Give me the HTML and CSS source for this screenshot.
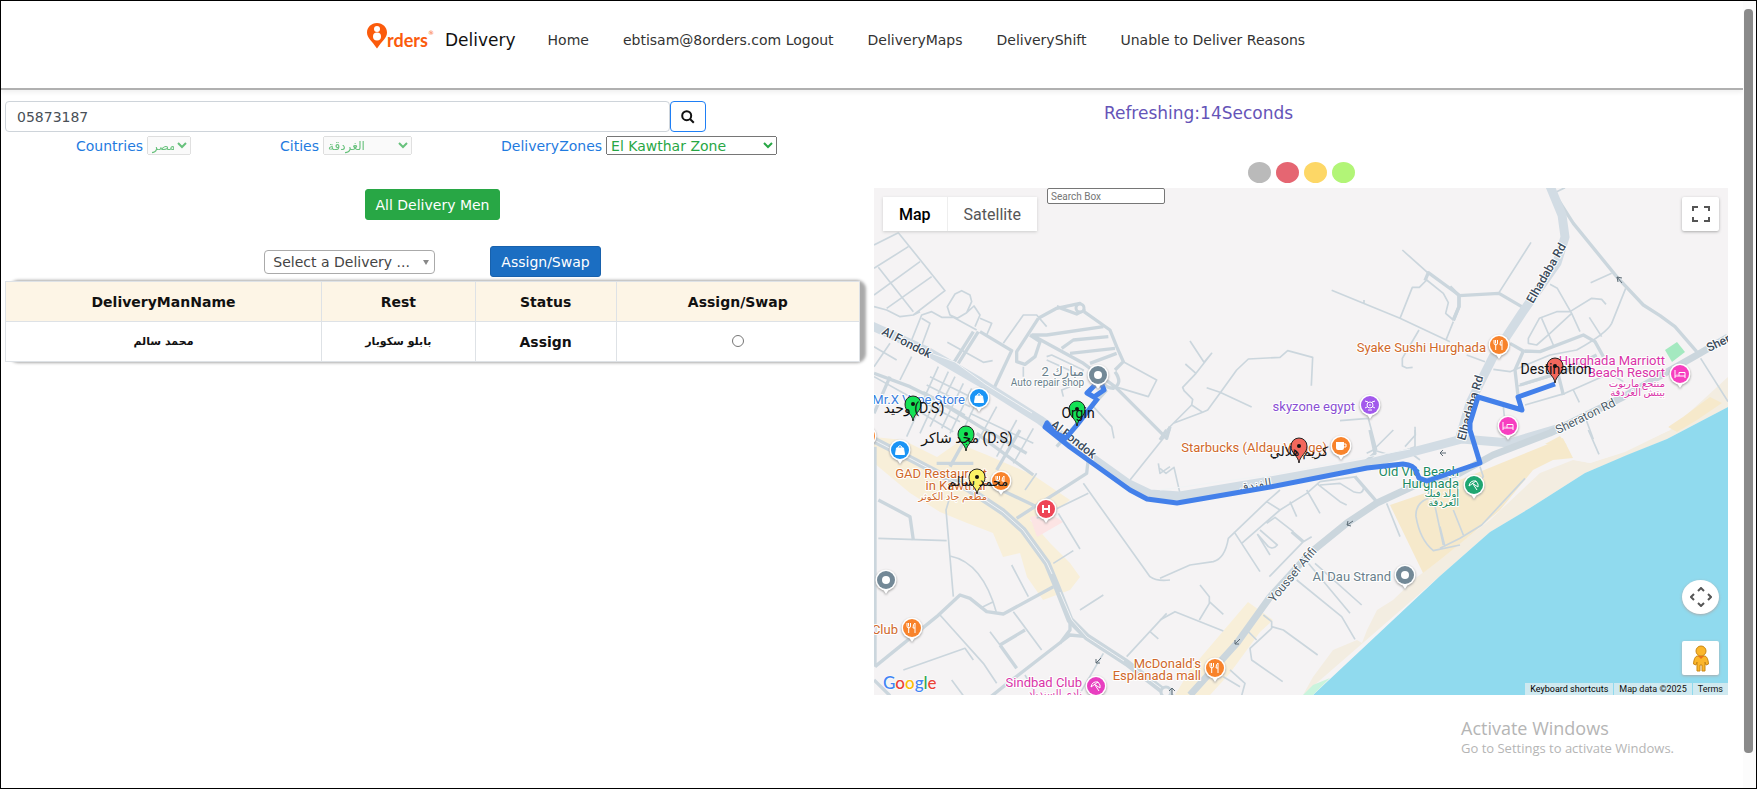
FILE: index.html
```html
<!DOCTYPE html>
<html lang="en">
<head>
<meta charset="utf-8">
<title>8Orders Delivery</title>
<meta name="viewport" content="width=device-width, initial-scale=1">
<link rel="stylesheet" href="styles.css">
</head>
<body>
<div class="page">
  <header class="topbar">
    <a class="brand" href="#">
      <span class="logo">
        <svg class="logo-pin" viewBox="0 0 20 26" aria-hidden="true">
          <path fill="#fb5b0c" d="M10 0C4.300 0 0 4.300 0 9.500C0 15 5 18 10 25.500C15 18 20 15 20 9.500C20 4.300 15.700 0 10 0Z"/>
          <circle cx="10" cy="6" r="3" fill="#fff"/><circle cx="10" cy="13.500" r="4" fill="#fff"/>
        </svg>
        <span class="logo-word">rders</span><span class="logo-mark">®</span>
      </span>
      <span class="brand-name">Delivery</span>
    </a>
    <nav class="menu">
      <a href="#">Home</a>
      <a href="#">ebtisam@8orders.com Logout</a>
      <a href="#">DeliveryMaps</a>
      <a href="#">DeliveryShift</a>
      <a href="#">Unable to Deliver Reasons</a>
    </nav>
  </header>

  <main class="columns">
    <section class="orders">
      <form class="search">
        <input class="search-input" type="text" value="05873187" aria-label="Order number">
        <button class="search-button" type="button" aria-label="Search">
          <svg viewBox="0 0 14 14" aria-hidden="true"><circle cx="5.700" cy="5.700" r="4.500"/><path d="M9 9L12.800 12.800"/></svg>
        </button>
      </form>
      <div class="filters">
        <div class="filter"><label for="country">Countries</label>
          <select id="country" class="country" disabled><option>مصر</option></select></div>
        <div class="filter"><label for="city">Cities</label>
          <select id="city" class="city" disabled><option>الغردقة</option></select></div>
        <div class="filter"><label for="zone">DeliveryZones</label>
          <select id="zone" class="zone"><option>El Kawthar Zone</option></select></div>
      </div>
      <button class="btn btn-green" type="button">All Delivery Men</button>
      <div class="assign">
        <div class="picker">
          <select aria-label="Delivery man"><option>Select a Delivery ...</option></select>
        </div>
        <button class="btn btn-blue" type="button">Assign/Swap</button>
      </div>
      <table class="men">
        <colgroup><col class="col-name"><col class="col-rest"><col class="col-status"><col></colgroup>
        <thead><tr><th>DeliveryManName</th><th>Rest</th><th>Status</th><th>Assign/Swap</th></tr></thead>
        <tbody><tr><td class="arabic">محمد سالم</td><td class="arabic">بابلو سكوبار</td><td>Assign</td>
          <td><input type="radio" name="man" aria-label="Assign محمد سالم"></td></tr></tbody>
      </table>
    </section>

    <section class="tracking">
      <p class="refresh">Refreshing:14Seconds</p>
      <div class="legend">
        <span class="dot gray"></span><span class="dot red"></span><span class="dot yellow"></span><span class="dot green"></span>
      </div>
      <div class="map">
        <svg class="map-canvas" viewBox="874 188 854 507" role="img" aria-label="Delivery route map">
          <defs>
            <g id="pin-base"><path d="M-4 8L0 14L4 8Z"/><circle r="10.500"/></g>
            <path id="marker" d="M0 0C-1 -8 -8 -9 -8 -17A8 8 0 0 1 8 -17C8 -9 1 -8 0 0Z"/>
            <g id="fork"><path d="M-3.500 -5V-1.500M-1.500 -5V-1.500M-5 -5V-2Q-5 0 -3.300 0Q-1.500 0 -1.500 -2M-3.300 -1V5M3 5V-5Q1 -4 1 0H3"/></g>
            <g id="bag"><path class="solid" d="M-3.500 -2H3.500L4.500 4.500H-4.500Z"/><path d="M-2 -2V-3Q0 -6 2 -3V-2"/></g>
            <g id="bed"><path d="M-5 4V-4M-5 2H5V4M5 2V-1.500H-1V2M-3 0V0.500"/></g>
            <g id="umbrella"><path d="M-5 1Q-4 -5 2 -4L-5 1M2 -4Q5 -1 4 2L-2 -2M-1 -1L3 5"/></g>
          </defs>
          <rect class="land" x="874" y="188" width="854" height="507"/>

          <g class="built">
            <path d="M874 437L903 440L937 457L957 443L987 455L1033 475L1070 500L1057 510L1030 520L1050 543L1070 563L1080 577L1070 590L1043 600L1027 577L1020 553L1003 557L993 533L967 523L940 512L910 493L874 463Z"/>
            <path d="M1248 602L1273 620L1260 632L1230 673L1210 695H1175L1190 670L1213 643Z"/>
          </g>
          <path class="clinic" d="M1030 517L1050 513L1063 522L1037 537Z"/>
          <path class="sand" d="M1362 643L1367 630L1377 610L1393 600L1417 577L1440 560L1460 543L1490 520L1540 473L1573 460L1590 463L1620 453L1670 430L1728 377V407L1667 439L1585 473L1530 508L1490 532L1440 576L1303 695L1313 677L1333 650L1357 640Z"/>
          <path class="beach" d="M1390 505L1440 488L1563 438L1573 458L1553 460L1533 470L1500 510L1473 533L1440 560L1423 573ZM1668 427L1683 417L1710 397L1722 403L1697 420L1677 432ZM1545 444L1560 436L1567 445Z"/>
          <path class="land" d="M1563 438L1670 392L1700 395L1668 427L1670 430L1625 452L1590 463L1575 460Z"/>
          <path class="water" d="M1728 407L1667 439L1627 455L1585 473L1530 508L1490 532L1440 576L1313 695H1728Z"/>
          <path class="park" d="M1665 350L1677 342L1685 352L1672 362Z"/>
          <path class="park pale" d="M1303 695L1313 685L1330 678L1313 695Z"/>

          <g class="road minor" transform="translate(870 180) scale(.33333)">
            <path d="M12 195L85 158L225 332L130 405M12 265L115 200M12 345L150 245M50 385L185 290M25 262L130 395M12 380L50 390L90 410L130 405L150 395"/>
            <path d="M125 480L155 405L185 395L215 412L250 412L320 450M232 380L255 342L275 332L300 345L305 365L290 398L262 415L240 405ZM290 398L312 378L330 405L315 440M330 415L365 430L350 465M155 415L180 430L150 510M232 487L340 547L368 542M400 490L460 405L500 405L530 440"/>
            <path d="M460 560V590M530 530L545 525L640 570L630 585L530 540M760 545L860 600L835 650L735 620M670 680L725 740L732 775M580 650L575 630L600 620M12 560L60 490M90 600L125 530M12 590L120 650M12 500L80 540"/>
            <path d="M205 560L110 770M235 575L150 760M255 590L180 740M280 610L215 745M305 625L240 760M180 590L310 655M170 615L300 680M160 635L285 705M150 660L270 725M140 690L250 755M330 645L270 770M380 680L320 790M440 720L380 830M490 745L430 850M300 700L490 790"/>
          </g>
          <g class="road medium" transform="translate(870 180) scale(.33333)">
            <path d="M325 455L265 550M310 455L250 550M330 455L425 512L365 640M505 415L440 515V545L465 553L495 530L510 485L480 465M505 415L560 385L630 370L642 390L620 402L560 380M642 395L720 450L740 500L760 545L735 570"/>
            <path d="M485 465L640 550L735 620L890 775L900 740M485 465L530 465L700 440M575 505L610 480L715 470M600 520L735 505M660 550L740 520M735 575Q760 610 730 625Q690 620 700 590M710 630L560 800M12 580L120 620L200 660L330 740L470 820M60 590L12 700"/>
          </g>
          <g class="road minor" transform="translate(1160 150) scale(.33333)">
            <path d="M727 300L803 368M515 421L720 505L870 575M612 460V450M720 505L757 412H778L800 390L850 430L865 458L857 490L880 510M880 515L858 570M777 540L727 625V648L740 654L758 652"/>
            <path d="M90 573L132 637L155 610L108 670L68 712L72 722L98 748L95 765L20 840M108 670L76 642M95 765L128 787L40 820M128 787L143 780L183 725L230 660L265 627L360 622L383 602L458 622L454 707M140 713L180 727L275 771M540 812L625 805L650 900M765 830L766 855L735 890"/>
          </g>
          <path class="road medium" transform="translate(1160 150) scale(.33333)" d="M795 392L805 368L897 435V470L880 512"/>
          <g class="road minor" transform="translate(1450 150) scale(.33333)">
            <path d="M243 277L147 428M422 398L485 370M527 415L485 520Q470 550 380 600L300 615L180 665L130 658M300 403L322 415L365 490L390 545M365 490L300 550L260 585L235 580V565L268 505L320 485H360L425 445L455 448L468 463M418 502L455 560M275 505L310 585M50 615L105 635M320 125L345 113M205 708L430 640M225 765L345 730L480 670M752 625L834 755M370 720L388 757M405 800L430 868M480 670L520 695M160 770L163 800"/>
          </g>
          <g class="road medium" transform="translate(1450 150) scale(.33333)">
            <path d="M325 150L370 220L500 380L580 465L630 497L675 530L740 605M0 410L27 437L147 430L215 470M27 437V470L10 510M180 580L220 603L270 605L400 555L435 575L460 620M220 603L195 660L205 745M210 705L340 665L440 615M325 675L340 735"/>
          </g>
          <g class="road minor" transform="translate(870 430) scale(.33333)">
            <path d="M25 325L230 332M240 200L228 240L250 500M240 378C300 390 350 440 380 550M330 535L370 515M425 405L475 500M565 250L630 357M550 400L610 362M630 540L700 495M500 265L655 190M640 160L840 440Q860 455 900 450M770 680L890 550M840 605L865 627M210 555L340 700L380 760M100 720L285 655L310 690M430 545L515 660M360 605L390 645M245 750L280 797M465 735L500 797M780 150L900 0M865 100L870 130L900 110M700 670L630 790M465 180L500 130"/>
          </g>
          <g class="road medium" transform="translate(870 430) scale(.33333)">
            <path d="M15 50V710M25 210L120 260L130 330M15 710L200 560L270 495L300 505L350 545L400 552L550 470M450 0L380 120M240 110L290 20M320 10L490 135M200 100L310 100M330 150L500 230M650 620L600 615L400 770L350 810M600 560V600L570 640M390 645L465 600M390 645L440 715M12 750L60 797M440 265L650 130L655 85"/>
          </g>
          <g class="road minor" transform="translate(1160 430) scale(.33333)">
            <path d="M0 445L90 405L160 395Q195 385 205 325L320 215L360 180M0 115L18 130L42 112L60 190M222 305L300 425M245 340L360 240L440 190L480 155L590 140M320 215L360 240M390 215L410 260M440 180L480 250M470 160L540 215L560 225M480 165L540 160L580 185Q610 195 610 175M300 300L352 345Q340 360 325 350L292 312M292 312L330 375M320 280L345 262L400 305M455 320L430 335L328 440M680 220L720 320M410 450L545 560L585 628M445 400L570 550M465 400L605 525M120 465L148 500V520L118 570M148 515L190 553M0 570L45 545L190 603M310 555L335 575V595L270 655L275 690L368 755M335 590L370 600L473 675M265 605L290 630M210 720L255 760L245 797M190 740L240 770M805 205Q765 220 768 260Q780 330 820 362L900 345M820 205L850 345M620 70L640 60L700 0M640 60L690 75M740 60L765 50V0M740 60L780 90"/>
          </g>
          <g class="road medium" transform="translate(1160 430) scale(.33333)">
            <path d="M585 140L650 215M395 305L430 335M0 30L20 0M630 0L645 70L605 105"/>
          </g>
          <path class="road minor" transform="translate(1440 430) scale(.33333)" d="M445 0L477 73M0 355L60 325L125 285L190 215L255 145M120 110L130 140L110 160M0 290L15 350M40 240L70 315"/>

          <g class="road major">
            <path d="M870 325L925 350L980 382L1040 420L1085 453L1127 483L1150 494L1180 496L1270 481L1370 463L1420 450L1462 439L1510 443L1560 428"/>
            <path d="M1550 186L1562 215L1565 237L1557 263L1522 313L1493 357L1470 403L1460 437"/>
          </g>
          <path class="lane" d="M933 354L955 362L985 384L1032 413M1160 490L1270 475L1410 449"/>
          <path class="road avenue" d="M1190 695L1237 643L1270 597L1310 553L1347 523L1377 503L1420 483L1460 473L1493 455L1550 433L1623 397L1697 355L1728 337"/>
          <path class="road avenue" d="M870 438L913 460L970 490L1003 512L1023 530L1047 563L1057 587L1070 620L1087 637L1127 663L1175 700"/>
          <path class="lane" d="M870 438L913 460L970 490L1003 512L1023 530L1047 563L1052 574M1060 592L1072 620L1087 637L1124 661M1134 668L1170 695"/>
          <circle class="ring" cx="1080" cy="308" r="4"/><circle class="ring" cx="1166" cy="692" r="5"/>
          <g class="arrows"><path d="M1440 453H1446M1440 453L1443 450M1440 453L1443 456M1347 525L1353 521M1347 525L1348 521M1347 525L1351 526M1235 644L1240 639M1235 644V640M1235 644H1239M1617 277L1622 283M1617 277L1618 282M1617 277L1622 278M1096 663L1101 658M1096 663V659M1096 663H1100M1172 697V688M1172 688L1169 691M1172 688L1175 691"/></g>

          <g class="label road-name">
            <text transform="translate(881 334) rotate(27)">Al Fondok</text>
            <text transform="translate(1050 426) rotate(38)">Al Fondok</text>
            <text transform="translate(1533 304) rotate(-60)">Elhadaba Rd</text>
            <text transform="translate(1465 441) rotate(-74)">Elhadaba Rd</text>
            <text class="thin" transform="translate(1558 434) rotate(-26)">Sheraton Rd</text>
            <text transform="translate(1709 352) rotate(-26)">Sheraton Rd</text>
            <text class="thin" transform="translate(1274 603) rotate(-50)">Youssef Afifi</text>
            <text class="thin" text-anchor="middle" transform="translate(1256 489) rotate(-9)">الفندق</text>
          </g>

          <g class="label orange">
            <text class="end" x="987" y="478">GAD Restaurant</text><text class="end" x="987" y="490">in Kawthar</text>
            <text class="end small" x="987" y="500">مطعم جاد الكوثر</text>
            <text class="end" x="898" y="634">Club</text>
            <text class="end" x="1486" y="352">Syake Sushi Hurghada</text>
            <text class="end" x="1327" y="452">Starbucks (Aldau Village)</text>
            <text class="end" x="1201" y="668">McDonald's</text><text class="end" x="1201" y="680">Esplanada mall</text>
          </g>
          <g class="label blue"><text class="end" x="965" y="404">Mr.X Vape Store</text></g>
          <g class="label slate">
            <text class="end" x="1084" y="376">مبارك 2</text><text class="end small" x="1084" y="386">Auto repair shop</text>
            <text class="end" x="1391" y="581">Al Dau Strand</text>
          </g>
          <g class="label purple"><text class="end" x="1355" y="411">skyzone egypt</text></g>
          <g class="label teal">
            <text class="end" x="1459" y="476">Old Vic Beach</text><text class="end" x="1459" y="488">Hurghada</text>
            <text class="end small" x="1459" y="497">أولد فيك</text><text class="end small" x="1459" y="506">الغردقة</text>
          </g>
          <g class="label pink">
            <text class="end" x="1665" y="365">Hurghada Marriott</text><text class="end" x="1665" y="377">Beach Resort</text>
            <text class="end small" x="1665" y="387">منتجع ماريوت</text><text class="end small" x="1665" y="396">بيتش الغردقة</text>
            <text class="end" x="1082" y="687">Sindbad Club</text><text class="end small" x="1082" y="697">نادي السندباد</text>
          </g>

          <path class="route" d="M1100 380L1087 393L1094 397L1104 390ZM1098 398L1077 425L1066 438L1055 433L1047 423L1045 427L1070 447L1130 490L1147 499L1177 503L1270 487L1367 468L1403 464Q1414 465 1416 471L1419 478L1427 481L1480 463L1470 430V423L1478 397L1522 410L1518 397L1555 384"/>

          <g class="poi">
            <g transform="translate(979 398)" fill="#1a94f5"><use href="#pin-base"/><circle r="9"/><use class="glyph" href="#bag"/></g>
            <g transform="translate(900 450)" fill="#1a94f5"><use href="#pin-base"/><circle r="9"/><use class="glyph" href="#bag"/></g>
            <g transform="translate(1001 481)" fill="#f8832b"><use href="#pin-base"/><circle r="9"/><use class="glyph" href="#fork"/></g>
            <g transform="translate(866 436)" fill="#f8832b"><use href="#pin-base"/><circle r="9"/></g>
            <g transform="translate(912 628)" fill="#f8832b"><use href="#pin-base"/><circle r="9"/><use class="glyph" href="#fork"/></g>
            <g transform="translate(1499 345)" fill="#f8832b"><use href="#pin-base"/><circle r="9"/><use class="glyph" href="#fork"/></g>
            <g transform="translate(1215 668)" fill="#f8832b"><use href="#pin-base"/><circle r="9"/><use class="glyph" href="#fork"/></g>
            <g transform="translate(1341 446)" fill="#f8832b"><use href="#pin-base"/><circle r="9"/><path class="solid" d="M-5 -4H3V2Q3 4 1 4H-3Q-5 4 -5 2Z"/><path class="glyph" d="M3 -2H5V1H3"/></g>
            <g transform="translate(1370 405)" fill="#a259ec"><use href="#pin-base"/><circle r="9"/><circle class="glyph" r="3"/><path class="glyph" d="M-5 -4L-2 -3M5 -4L2 -3M-5 3L-3 2M5 3L3 2M-1 0H1M-2 5H2"/></g>
            <g transform="translate(1098 375)" fill="#738997"><use href="#pin-base"/><circle r="9"/><circle class="solid" r="4"/></g>
            <g transform="translate(886 580)" fill="#738997"><use href="#pin-base"/><circle r="9"/><circle class="solid" r="4"/></g>
            <g transform="translate(1405 575)" fill="#738997"><use href="#pin-base"/><circle r="9"/><circle class="solid" r="4"/></g>
            <g transform="translate(1474 485)" fill="#1fa671"><use href="#pin-base"/><circle r="9"/><use class="glyph" href="#umbrella"/></g>
            <g transform="translate(1680 374)" fill="#f73fc0"><use href="#pin-base"/><circle r="9"/><use class="glyph" href="#bed"/></g>
            <g transform="translate(1508 426)" fill="#f73fc0"><use href="#pin-base"/><circle r="9"/><use class="glyph" href="#bed"/></g>
            <g transform="translate(1096 686)" fill="#e83fc0"><use href="#pin-base"/><circle r="9"/><use class="glyph" href="#umbrella"/></g>
            <g transform="translate(1046 509)" fill="#ee4556"><use href="#pin-base"/><circle r="9"/><path class="glyph bold" d="M-3 -4V4M3 -4V4M-3 0H3"/></g>
          </g>

          <g class="markers">
            <g transform="translate(913 421)" fill="#15e256"><use href="#marker"/><circle cy="-17" r="2"/></g>
            <g transform="translate(966 451)" fill="#15e256"><use href="#marker"/><circle cy="-17" r="2"/></g>
            <g transform="translate(977 494)" fill="#fbf267"><use href="#marker"/><circle cy="-17" r="2"/></g>
            <g transform="translate(1077 426)" fill="#15e256"><use href="#marker"/><circle cy="-17" r="2"/></g>
            <g transform="translate(1299 463)" fill="#f3675c"><use href="#marker"/><circle cy="-17" r="2"/></g>
            <g transform="translate(1555 383)" fill="#f3675c"><use href="#marker"/><circle cy="-17" r="2"/></g>
          </g>
          <g class="marker-name">
            <text x="914" y="413"><tspan>وحيد</tspan> (D.S)</text>
            <text x="967" y="443"><tspan>مجد شاكر</tspan> (D.S)</text>
            <text class="arabic-name" x="978" y="486">محمد سالم</text>
            <text x="1078" y="418">Orgin</text>
            <text class="arabic-name" x="1299" y="456">كريم هلالي</text>
            <text x="1556" y="374">Destination</text>
          </g>
        </svg>

        <div class="map-type"><button class="active" type="button">Map</button><button type="button">Satellite</button></div>
        <input class="map-search" type="text" placeholder="Search Box" aria-label="Search Box">
        <button class="tool fullscreen" type="button" aria-label="Toggle fullscreen view">
          <svg viewBox="0 0 18 16"><path d="M1 5V1H6M12 1H17V5M17 11V15H12M6 15H1V11"/></svg>
        </button>
        <div class="map-tools">
          <button class="tool round" type="button" aria-label="Map camera controls">
            <svg viewBox="0 0 22 20"><path d="M8 4L11 1L14 4M8 16L11 19L14 16M4 7L1 10L4 13M18 7L21 10L18 13"/></svg>
          </button>
          <button class="tool pegman" type="button" aria-label="Street View">
            <svg viewBox="0 0 18 27"><path d="M5 11Q2 12 1.500 19L4 20L5 17V26H8V20H10V26H13V17L14 20L16.500 19Q16 12 13 11Z"/><circle cx="9" cy="6" r="5"/><path class="collar" d="M6 11H12L9 14Z"/></svg>
          </button>
        </div>
        <a class="google" href="#" aria-label="Google"><span class="b">G</span><span class="r">o</span><span class="y">o</span><span class="b">g</span><span class="g">l</span><span class="r">e</span></a>
        <div class="credits"><button type="button">Keyboard shortcuts</button><span>Map data ©2025</span><a href="#">Terms</a></div>
      </div>
      <div class="activate"><p class="activate-title">Activate Windows</p><p>Go to Settings to activate Windows.</p></div>
    </section>
  </main>
</div>
<div class="rail"><div class="thumb"></div></div>
</body>
</html>
```
FILE: styles.css
```css
* { box-sizing: border-box; }

body {
  margin: 0;
  min-height: 100vh;
  display: flex;
  border: 1px solid #000;
  background: #fff;
  color: #212529;
  font-family: Verdana, "DejaVu Sans", sans-serif;
  font-size: 14px;
}

p { margin: 0; }
a { color: inherit; text-decoration: none; }
button, input, select { font: inherit; margin: 0; }

.page { flex: 1; min-width: 0; }

.rail {
  width: 13px;
  padding: 8px 3px 35px 1px;
  background: #fcfcfc;
  display: flex;
}
.thumb { flex: 1; border-radius: 4px; background: #8a8a8a; }

/* header */
.topbar {
  display: flex;
  align-items: center;
  gap: 32px;
  height: 89px;
  padding: 0 0 9px 366px;
  border-bottom: 2px solid #b0b0b0;
  box-shadow: 0 2px 5px #eee;
  white-space: nowrap;
}
.brand { display: flex; align-items: center; gap: 10px; }
.logo { display: flex; align-items: flex-start; width: 68px; color: #fb5b0c; }
.logo-pin { width: 20px; height: 26px; margin-top: -5px; flex: none; }
.logo-word { font: bold 18px/24px Lato, sans-serif; }
.logo-mark { font-size: 6px; line-height: 10px; }
.brand-name { font-size: 17px; color: #111; }
.menu { display: flex; gap: 34px; color: #333; }

/* columns */
.columns {
  display: grid;
  grid-template-columns: minmax(0, 1fr) minmax(0, 1fr);
  padding-left: 4px;
}
.orders { display: flex; flex-direction: column; align-items: center; padding: 11px 14px 0 0; }
.search { display: flex; align-self: flex-start; width: 82%; }
.search-input {
  flex: 1;
  min-width: 0;
  height: 31px;
  padding: 0 11px;
  border: 1px solid #ced4da;
  border-radius: 4px;
  color: #495057;
}
.search-button {
  display: grid;
  place-items: center;
  width: 36px;
  padding: 0;
  border: 1px solid #1f7ff5;
  border-radius: 4px;
  background: #fff;
}
.search-button svg { width: 14px; height: 14px; fill: none; stroke: #111; stroke-width: 2; }

.filters { display: flex; gap: 89px; margin-top: 4px; padding-right: 12px; color: #1f7be0; }
.filter { display: flex; align-items: center; gap: 4px; }
.filter select { height: 19px; padding: 0; color: #28a745; }
.country { width: 44px; font-size: 12px; }
.city { width: 89px; font-size: 12px; }
.zone { width: 171px; }

.btn {
  height: 31px;
  padding: 0 10px;
  border: 1px solid;
  border-radius: 3px;
  color: #fff;
  white-space: nowrap;
}
.btn-green { margin-top: 34px; background: #28a745; border-color: #28a745; }
.btn-blue { background: #1b6ec2; border-color: #1861ac; }

.assign { display: flex; align-items: center; gap: 55px; margin-top: 26px; }
.picker { position: relative; width: 171px; }
.picker select {
  appearance: none;
  width: 100%;
  height: 24px;
  padding: 0 8px;
  border: 1px solid #aaa;
  border-radius: 4px;
  background: #fff;
  color: #444;
}
.picker::after {
  content: "";
  position: absolute;
  right: 6px;
  top: 10px;
  border: 3px solid transparent;
  border-top: 5px solid #888;
  border-bottom: 0;
}

.men {
  width: 100%;
  margin-top: 4px;
  table-layout: fixed;
  border-collapse: collapse;
  border-radius: 8px;
  box-shadow: 5px 0 3px 1px #aaa;
  background: #fff;
  color: #111;
  font-weight: bold;
  text-align: center;
}
.men th, .men td { height: 40px; padding: 0; border: 1px solid #dee2e6; }
.men th { background: #fdf5e6; }
.men td { background: #fff; }
.men .arabic { font-size: 11px; }
.men input { width: 12px; height: 12px; }
.col-name { width: 37%; }
.col-rest { width: 18%; }
.col-status { width: 16.5%; }

/* tracking */
.tracking { padding: 12px 15px 0 0; }
.refresh { width: 76%; text-align: center; font-size: 17px; line-height: 22px; color: #6554b8; }
.legend { display: flex; justify-content: center; gap: 5px; margin-top: 38px; }
.dot { width: 23px; height: 21px; border-radius: 50%; }
.gray { background: #bababa; }
.red { background: #e56672; }
.yellow { background: #fdd766; }
.green { background: #b2f577; }

.map { position: relative; margin-top: 5px; overflow: hidden; font-family: Roboto, Arial, sans-serif; }
.map-canvas { display: block; width: 100%; height: auto; }
.land { fill: #f5f3f4; }
.built { fill: #f8efd9; }
.clinic { fill: #fce4e4; }
.sand { fill: #f3ede1; }
.beach { fill: #f6e9cb; }
.water { fill: #90daee; }
.park { fill: #a4e9c0; }
.pale { fill: #c9f4dd; }
.road { fill: none; stroke: #cbd6dd; stroke-linejoin: round; }
.minor { stroke-width: 5; }
.medium { stroke-width: 10; }
.major { stroke: #d2dce4; stroke-width: 9; }
.avenue { stroke-width: 7; }
.lane { fill: none; stroke: #f1f3f5; stroke-width: 1; }
.ring { fill: #f5f3f4; stroke: #cbd6dd; stroke-width: 3; }
.arrows { fill: none; stroke: #5c6b75; stroke-width: 1; }
.route { fill: none; stroke: #4380ea; stroke-width: 5; stroke-linejoin: round; }

.label {
  font-size: 13px;
  font-family: Roboto, "DejaVu Sans", sans-serif;
  stroke: #fff;
  stroke-width: 2px;
  stroke-linejoin: round;
  paint-order: stroke;
}
.label .small { font-size: 10px; }
.end { text-anchor: end; }
.road-name { fill: #3a4a5a; font-size: 12px; font-weight: 500; }
.road-name .thin { font-weight: 400; fill: #4c5b68; }
.orange { fill: #d0682a; }
.blue { fill: #3a7fe0; }
.slate { fill: #6a7f8c; }
.purple { fill: #8a4fd3; }
.teal { fill: #1b8a62; }
.pink { fill: #d934a8; }

.poi use[href="#pin-base"] { fill: #fff; filter: drop-shadow(0 1px 1px #999); }
.poi .glyph { fill: none; stroke: #fff; stroke-width: 1; }
.poi .bold { stroke-width: 2; }
.solid { fill: #fff; }
.markers use { stroke: #222; stroke-width: 1; }
.markers circle { fill: #111; }
.marker-name { font-size: 14px; fill: #111; text-anchor: middle; font-family: Roboto, "DejaVu Sans", sans-serif; }
.marker-name .arabic-name { font-size: 13px; }

.map-type {
  position: absolute;
  left: 9px;
  top: 9px;
  display: flex;
  height: 34px;
  background: #fff;
  box-shadow: 0 1px 3px #ccc;
}
.map-type button { border: 0; background: #fff; padding: 0 16px; font-size: 16px; color: #565656; }
.map-type .active { color: #000; font-weight: 500; border-right: 1px solid #eee; }
.map-search {
  position: absolute;
  left: 173px;
  top: 0;
  width: 118px;
  height: 16px;
  padding: 0 3px;
  border: 1px solid #767676;
  border-radius: 2px;
  font-size: 10px;
}
.tool {
  display: grid;
  place-items: center;
  width: 37px;
  height: 34px;
  padding: 0;
  border: 0;
  border-radius: 2px;
  background: #fff;
  box-shadow: 0 1px 3px #aaa;
}
.tool svg { fill: none; stroke: #555; stroke-width: 2; }
.fullscreen { position: absolute; right: 9px; top: 9px; }
.fullscreen svg { width: 18px; height: 16px; }
.map-tools { position: absolute; right: 9px; bottom: 20px; display: grid; gap: 27px; }
.round { border-radius: 50%; }
.round svg { width: 22px; height: 20px; }
.pegman svg { width: 18px; height: 27px; fill: #fbb62b; stroke: #c98715; stroke-width: 1; }
.pegman .collar { fill: #e8711a; stroke: none; }
.google {
  position: absolute;
  left: 9px;
  bottom: 1px;
  font: 500 17px/22px Lato, sans-serif;
  -webkit-text-stroke: 1px #fff;
  paint-order: stroke;
}
.b { color: #4285f4; }
.r { color: #ea4335; }
.y { color: #fbbc05; }
.g { color: #34a853; }
.credits {
  position: absolute;
  right: 0;
  bottom: 0;
  display: flex;
  gap: 1px;
  font-size: 9px;
  line-height: 12px;
  color: #111;
}
.credits > * { padding: 0 5px; border: 0; background: #cfe9f0; font-size: 9px; }

.activate { width: 267px; margin: 22px 0 0 auto; color: #b5b5b5; font: 13px/18px "Open Sans", sans-serif; }
.activate-title { font-size: 18px; line-height: 22px; }
```
